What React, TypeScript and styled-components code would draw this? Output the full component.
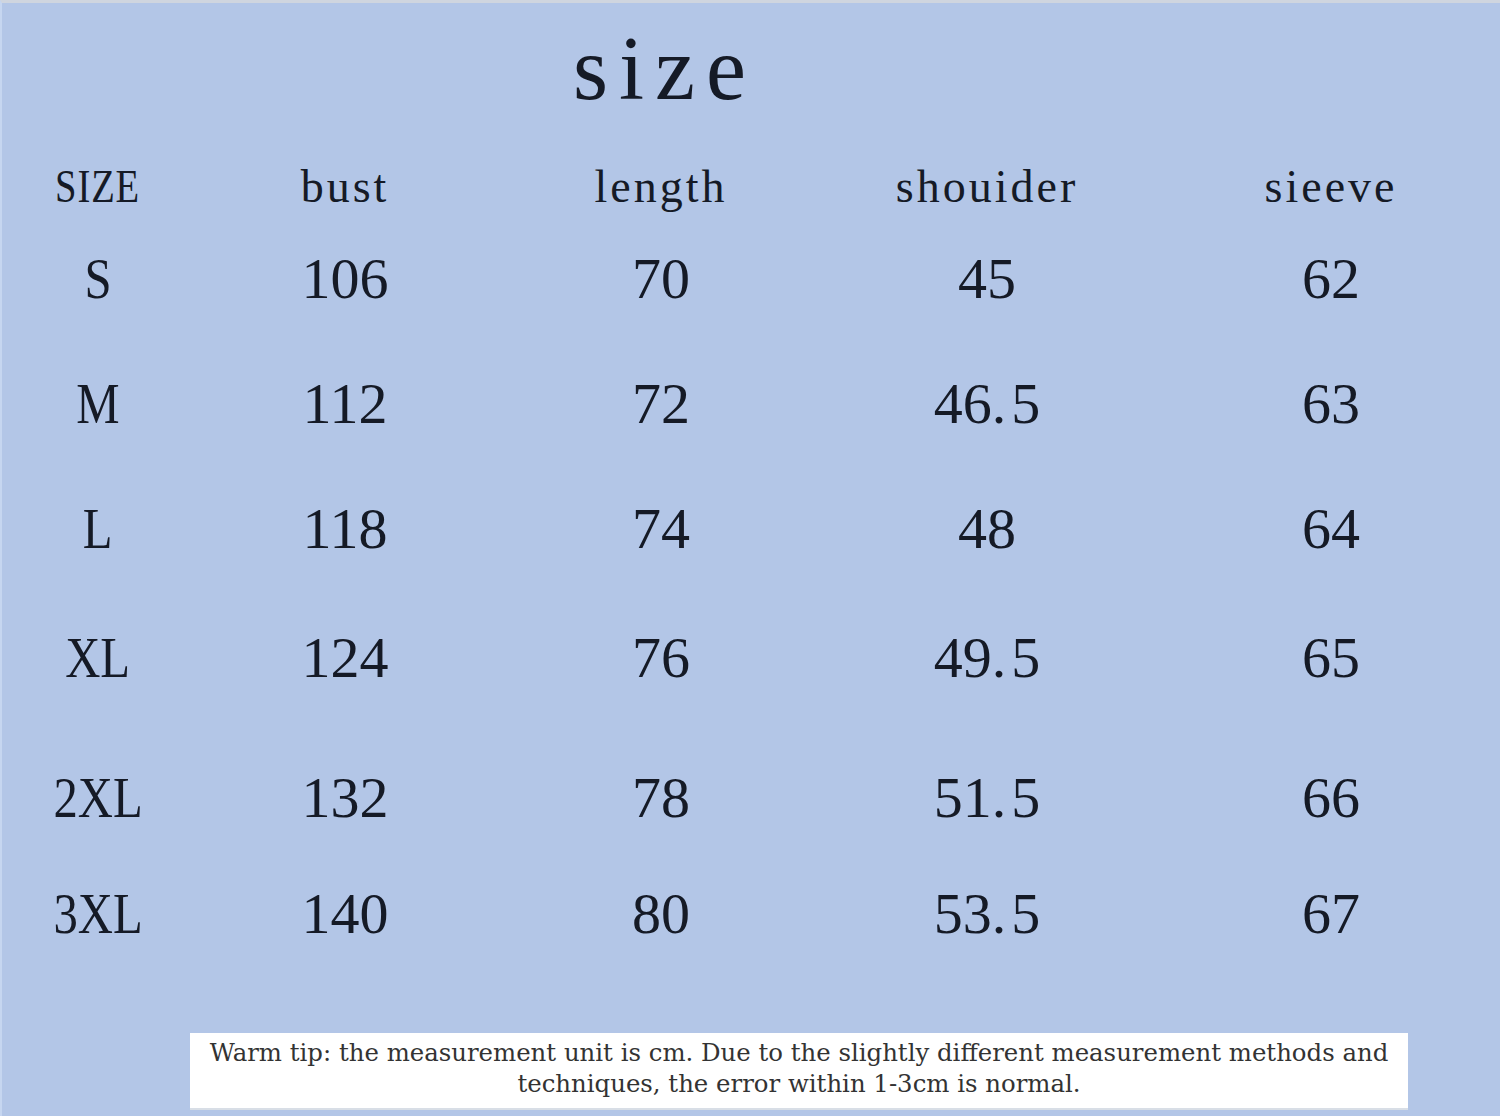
import React from 'react';
import styled, { createGlobalStyle } from 'styled-components';

const GlobalStyle = createGlobalStyle`
  html, body {
    margin: 0;
    padding: 0;
    background: #b3c6e7;
  }
`;

const Page = styled.div`
  width: 1500px;
  height: 1116px;
  overflow: hidden;
  background: #b3c6e7;
  border-top: 3px solid #cfd5df;
  border-left: 2px solid #c6d6f0;
  box-sizing: border-box;
  font-family: 'Liberation Serif', 'Noto Sans CJK SC', serif;
  color: #151a26;
  display: flex;
  flex-direction: column;
`;

const Title = styled.h1`
  margin: 0;
  height: 137px;
  padding-left: 571px;
  font-weight: normal;
  font-size: 90px;
  line-height: 132px;
  letter-spacing: 11px;
`;

const Table = styled.div`
  display: grid;
  grid-template-columns: 192px 302px 330px 322px 366px;
  grid-template-rows: 94px 89px 161px 89px 170px 110px 121px;
  align-items: center;
  justify-items: center;
`;

const Cell = styled.div<{ $head?: boolean; $label?: boolean; $spacing?: number }>`
  font-size: ${(p) => (p.$head ? '46px' : '58px')};
  letter-spacing: ${(p) => (p.$spacing ?? (p.$head ? 3 : 0))}px;
  line-height: 1;
  white-space: nowrap;
  transform: ${(p) => (p.$label ? 'scaleX(0.84)' : 'none')};
`;

const Tip = styled.div`
  margin: 59px 0 0 188px;
  width: 1218px;
  height: 77px;
  padding-bottom: 6px;
  box-sizing: border-box;
  background: #fff;
  border-bottom: 2px solid #d8dee6;
  display: flex;
  align-items: center;
  justify-content: center;
  text-align: center;
  font-family: 'DejaVu Serif', serif;
  font-size: 24.4px;
  line-height: 31px;
  color: #333;
  white-space: nowrap;
`;

const headers = ['SIZE', 'bust', 'length', 'shouider', 'sieeve'];

// hair space after the decimal point, like the wide gap in the chart
const rows: string[][] = [
  ['S', '106', '70', '45', '62'],
  ['M', '112', '72', '46.\u200a5', '63'],
  ['L', '118', '74', '48', '64'],
  ['XL', '124', '76', '49.\u200a5', '65'],
  ['2XL', '132', '78', '51.\u200a5', '66'],
  ['3XL', '140', '80', '53.\u200a5', '67'],
];

const App: React.FC = () => {
  return (
    <Page>
      <GlobalStyle />
      <Title>size</Title>
      <Table>
        {headers.map((h, i) => (
          <Cell $head $label={i === 0} $spacing={i === 0 ? 1 : undefined} key={h}>
            {h}
          </Cell>
        ))}
        {rows.map((r) =>
          r.map((v, i) => (
            <Cell $label={i === 0} key={r[0] + i}>
              {v}
            </Cell>
          ))
        )}
      </Table>
      <Tip>
        Warm tip: the measurement unit is cm. Due to the slightly different measurement methods and
        <br />
        techniques, the error within 1-3cm is normal.
      </Tip>
    </Page>
  );
};

export default App;
